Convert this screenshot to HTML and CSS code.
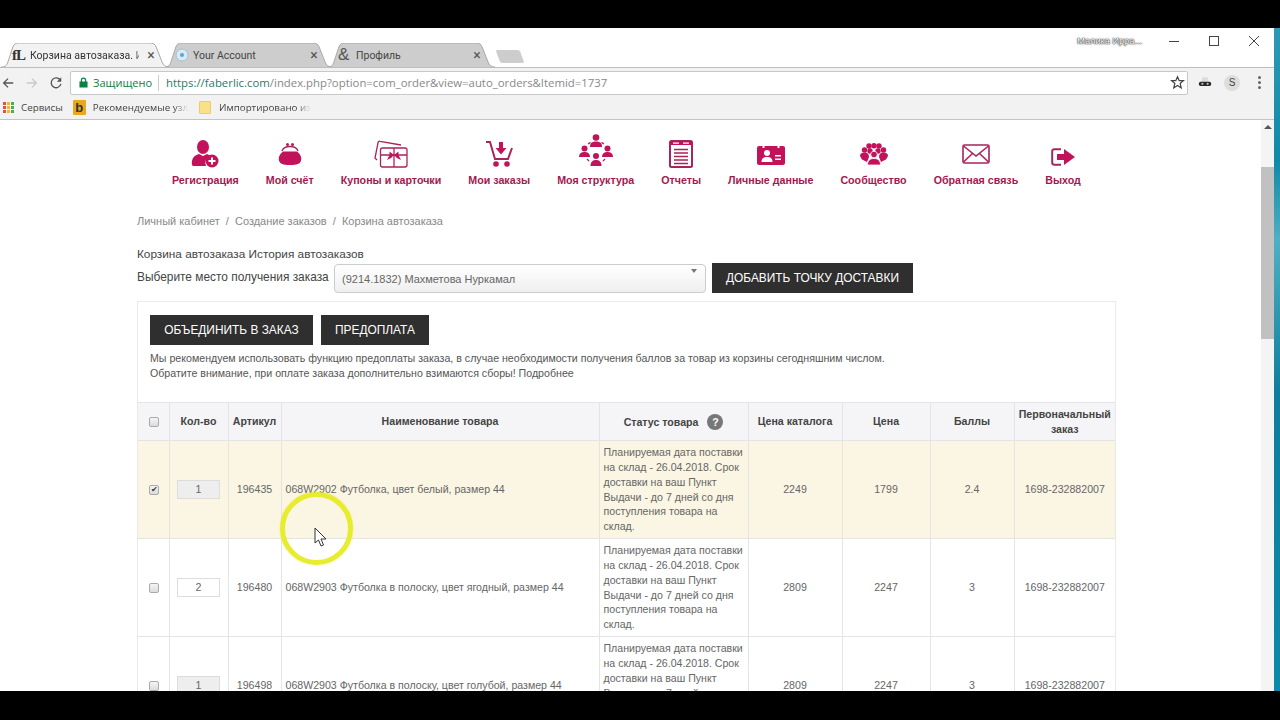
FILE: index.html
```html
<!DOCTYPE html>
<html lang="ru">
  <head>
    <meta charset="UTF-8" />
    <title>Корзина автозаказа</title>
    <link rel="stylesheet" href="styles.css">
  </head>
  <body>
    <div class="letterbox-top"></div>
    <div class="screen">
      <div class="window">
        <div class="tabstrip">
          <div class="tab tab-active">
            <svg class="tab-shape" viewBox="0 0 170 24" preserveAspectRatio="none"><path d="M0 24C5 24 6 22 7 19L12 4C13 1 15 0 18 0H150C154 0 156 1 157 4L163 19C164 22 166 24 170 24"/></svg>
            <span class="fav fav-fl">fL</span>
            <span class="tab-title">Корзина автозаказа. Ис</span>
            <span class="tab-close">×</span>
          </div>
          <div class="tab">
            <svg class="tab-shape" viewBox="0 0 170 24" preserveAspectRatio="none"><path d="M0 24C5 24 6 22 7 19L12 4C13 1 15 0 18 0H150C154 0 156 1 157 4L163 19C164 22 166 24 170 24"/></svg>
            <svg class="fav" viewBox="0 0 14 14"><circle cx="7" cy="7" r="6" fill="#dbe9f3" stroke="#9cc3dc"/><circle cx="7" cy="7" r="2" fill="#5aa4d6"/></svg>
            <span class="tab-title">Your Account</span>
            <span class="tab-close">×</span>
          </div>
          <div class="tab">
            <svg class="tab-shape" viewBox="0 0 170 24" preserveAspectRatio="none"><path d="M0 24C5 24 6 22 7 19L12 4C13 1 15 0 18 0H150C154 0 156 1 157 4L163 19C164 22 166 24 170 24"/></svg>
            <span class="fav fav-amp">&amp;</span>
            <span class="tab-title">Профиль</span>
            <span class="tab-close">×</span>
          </div>
          <div class="tab-new"></div>
          <div class="profile-name">Малика Ирра...</div>
          <div class="win-buttons">
            <svg viewBox="0 0 12 12"><path d="M1 6.5H11"/></svg>
            <svg viewBox="0 0 12 12"><rect x="1.5" y="1.5" width="9" height="9"/></svg>
            <svg viewBox="0 0 12 12"><path d="M1 1L11 11M11 1L1 11"/></svg>
          </div>
        </div>

        <div class="toolbar">
          <svg class="nav-btn" viewBox="0 0 16 16"><path d="M14 8H3M8 3L3 8L8 13"/></svg>
          <svg class="nav-btn nav-btn-off" viewBox="0 0 16 16"><path d="M2 8H13M8 3L13 8L8 13"/></svg>
          <svg class="nav-btn" viewBox="0 0 16 16"><path d="M13 5A5.6 5.6 0 1 0 13.6 9"/><path class="solid" d="M14 1.5V6.500H9Z"/></svg>
          <div class="omnibox">
            <svg class="lock" viewBox="0 0 10 12"><path d="M2 5V3.500A3 3 0 0 1 8 3.500V5H9.500V11.500H.5V5ZM3.300 5H6.700V3.500A1.700 1.700 0 0 0 3.300 3.500Z"/></svg>
            <span class="secure">Защищено</span>
            <span class="url"><b>https://faberlic.com</b>/index.php?option=com_order&amp;view=auto_orders&amp;Itemid=1737</span>
            <svg class="star" viewBox="0 0 16 16"><path d="M8 1.800L9.800 6H14.300L10.800 9L12 13.800L8 11.200L4 13.800L5.200 9L1.700 6H6.200Z"/></svg>
          </div>
          <div class="extensions">
            <svg class="ext-glasses" viewBox="0 0 16 12"><path class="hat" d="M4 5L5 0H11L12 5Z"/><rect x="1" y="5" width="14" height="5" rx="2"/><circle class="eye" cx="5" cy="7.500" r="1.300"/><circle class="eye" cx="11" cy="7.500" r="1.300"/></svg>
            <span class="ext-s">S</span>
            <span class="ext-menu"><i></i><i></i><i></i></span>
          </div>
        </div>

        <div class="bookmarks">
          <span class="bm">
            <span class="apps-grid"><i></i><i></i><i></i><i></i><i></i><i></i><i></i><i></i><i></i></span>
            Сервисы
          </span>
          <span class="bm">
            <span class="bing-icon">b</span>
            <span class="bm-fade">Рекомендуемые узл</span>
          </span>
          <span class="bm">
            <span class="folder-icon"></span>
            <span class="bm-fade">Импортировано из</span>
          </span>
        </div>

        <div class="viewport">
          <div class="page">
            <nav class="topnav">
              <a class="topnav-item">
                <svg viewBox="0 0 28 28" width="28" height="28"><ellipse cx="12" cy="7" rx="6" ry="7"/><path d="M1 25C0 18 4 15 8 14L12 16L16 14C17 14.500 18 15 19 15.500A8 8 0 0 0 15 26H2Z"/><circle cx="21" cy="21" r="6.500"/><path class="cut" d="M20 17.500H22V20H24.500V22H22V24.500H20V22H17.500V20H20Z"/></svg>
                Регистрация
              </a>
              <a class="topnav-item">
                <svg viewBox="0 0 24 24" width="24" height="24"><circle cx="9.500" cy="2.500" r="1.500"/><circle cx="14.500" cy="2.500" r="1.500"/><path class="line" d="M4 9C6 3 18 3 20 9"/><path d="M5 9.500H19C22 12 24 15 23 18.500C22 22 19 23 12 23C5 23 2 22 1 18.500C0 15 2 12 5 9.500Z"/></svg>
                Мой счёт
              </a>
              <a class="topnav-item">
                <svg viewBox="0 0 34 28" width="34" height="28"><path class="line" d="M3 20L1 18L4 3C4 1.500 5 1 6 1.300L27 5"/><rect class="line" x="6.500" y="8" width="26.500" height="19" rx="2"/><path class="line" d="M6.500 15H33M20 8V27"/><path d="M20 15L15.500 11.500L15.500 15L13 20L17 18L20 15L23 18L27 20L24.500 15L24.500 11.500Z"/></svg>
                Купоны и карточки
              </a>
              <a class="topnav-item">
                <svg viewBox="0 0 28 28" width="28" height="28"><path class="line line-thick" d="M1 2H5L10 19H23L27 8"/><circle cx="11" cy="24" r="2.800"/><circle cx="22" cy="24" r="2.800"/><path d="M14 2H18V8H21.500L16 14.500L10.500 8H14Z"/></svg>
                Мои заказы
              </a>
              <a class="topnav-item">
                <svg class="icon-struct" viewBox="0 0 34 32" width="34" height="32"><circle cx="17" cy="3.500" r="3.300"/><path d="M11 13C11 8 14 7.500 17 7.500C20 7.500 23 8 23 13Z"/><circle cx="5.500" cy="14.500" r="3"/><path d="M0 23C0 19 3 18 5.500 18C8 18 11 19 11 23Z"/><circle cx="28.500" cy="14.500" r="3"/><path d="M23 23C23 19 26 18 28.500 18C31 18 34 19 34 23Z"/><circle cx="17" cy="22" r="3"/><path d="M11.500 32C11.500 27 14.500 26 17 26C19.500 26 22.500 27 22.500 32Z"/><path class="line" stroke-dasharray="3 2" d="M9 10L12 8M25 10L22 8M8 25L11 28M26 25L23 28"/></svg>
                Моя структура
              </a>
              <a class="topnav-item">
                <svg viewBox="0 0 24 28" width="24" height="28"><rect class="line line-thick" x="1" y="1" width="22" height="26" rx="1.500"/><path d="M1 1H23V5H1Z"/><path class="cut" d="M4 2.500H10V3.700H4ZM14 2.500H20V3.700H14Z"/><path class="line" d="M5 9.500H19M5 13H19M5 16.500H19M5 20H19M5 23.500H19"/></svg>
                Отчеты
              </a>
              <a class="topnav-item">
                <svg viewBox="0 0 28 22" width="28" height="22"><rect y="3" width="28" height="19" rx="2"/><rect class="cut" x="5.500" y="0" width="2" height="5"/><rect class="cut" x="20.500" y="0" width="2" height="5"/><circle class="cut" cx="10" cy="10" r="3"/><path class="cut" d="M4.500 19C4.500 15 7 14 10 14C13 14 15.500 15 15.500 19Z"/><path class="cut" d="M18 12H24V13.500H18ZM18 15.500H24V17H18Z"/></svg>
                Личные данные
              </a>
              <a class="topnav-item">
                <svg class="icon-crowd" viewBox="0 0 28 22" width="28" height="22"><circle cx="9" cy="3" r="2.700"/><circle cx="14" cy="2.700" r="2.700"/><circle cx="19" cy="3" r="2.700"/><circle cx="4.500" cy="7" r="2.700"/><circle cx="23.500" cy="7" r="2.700"/><circle cx="10" cy="8" r="2.700"/><circle cx="18" cy="8" r="2.700"/><path d="M0 13C0 10 3 9.500 5 9.500C8 9.500 9 12 9 14L7 19L2 16.500Z"/><path d="M28 13C28 10 25 9.500 23 9.500C20 9.500 19 12 19 14L21 19L26 16.500Z"/><circle class="front" cx="14" cy="11.500" r="3.300"/><path class="front" d="M7.500 22C7.500 17 10.500 15.500 14 15.500C17.500 15.500 20.500 17 20.500 22Z"/></svg>
                Сообщество
              </a>
              <a class="topnav-item">
                <svg viewBox="0 0 28 20" width="28" height="20"><rect class="line line-mail" x="1" y="1" width="26" height="18" rx="1.500"/><path class="line line-mail" d="M1.500 2L14 12L26.500 2M1.500 18L10.500 9.500M26.500 18L17.500 9.500"/></svg>
                Обратная связь
              </a>
              <a class="topnav-item">
                <svg class="icon-exit" viewBox="0 0 24 18" width="24" height="18"><path class="line line-thick" d="M10 1.200H3.500C2 1.200 1.200 2 1.200 3.500V14.500C1.200 16 2 16.800 3.500 16.800H10"/><path d="M6 6H13V1L24 9L13 17V12H6Z"/></svg>
                Выход
              </a>
            </nav>

            <div class="content">
              <div class="breadcrumb">Личный кабинет <span>/</span> Создание заказов <span>/</span> Корзина автозаказа</div>
              <div class="cart-links">Корзина автозаказа История автозаказов</div>
              <div class="delivery-row">
                <span class="delivery-label">Выберите место получения заказа</span>
                <div class="select-box">(9214.1832) Махметова Нуркамал</div>
                <button class="btn btn-delivery">ДОБАВИТЬ ТОЧКУ ДОСТАВКИ</button>
              </div>

              <div class="panel">
                <div class="panel-head">
                  <div class="panel-buttons">
                    <button class="btn btn-merge">ОБЪЕДИНИТЬ В ЗАКАЗ</button>
                    <button class="btn btn-prepay">ПРЕДОПЛАТА</button>
                  </div>
                  <p class="notice">Мы рекомендуем использовать функцию предоплаты заказа, в случае необходимости получения баллов за товар из корзины сегодняшним числом.<br />Обратите внимание, при оплате заказа дополнительно взимаются сборы! Подробнее</p>
                </div>

                <table class="orders">
                  <colgroup>
                    <col class="col-check" /><col class="col-qty" /><col class="col-art" /><col class="col-name" /><col class="col-status" /><col class="col-catalog" /><col class="col-price" /><col class="col-points" /><col class="col-first" />
                  </colgroup>
                  <thead>
                    <tr>
                      <th><span class="check"></span></th>
                      <th>Кол-во</th>
                      <th>Артикул</th>
                      <th>Наименование товара</th>
                      <th>Статус товара <span class="help">?</span></th>
                      <th>Цена каталога</th>
                      <th>Цена</th>
                      <th>Баллы</th>
                      <th>Первоначальный заказ</th>
                    </tr>
                  </thead>
                  <tbody>
                    <tr class="row-selected">
                      <td class="c"><span class="check check-on">✔</span></td>
                      <td class="c"><span class="qty qty-off">1</span></td>
                      <td class="c">196435</td>
                      <td>068W2902 Футболка, цвет белый, размер 44</td>
                      <td>Планируемая дата поставки на склад - 26.04.2018. Срок доставки на ваш Пункт Выдачи - до 7 дней со дня поступления товара на склад.</td>
                      <td class="c">2249</td>
                      <td class="c">1799</td>
                      <td class="c">2.4</td>
                      <td class="c">1698-232882007</td>
                    </tr>
                    <tr>
                      <td class="c"><span class="check"></span></td>
                      <td class="c"><span class="qty">2</span></td>
                      <td class="c">196480</td>
                      <td>068W2903 Футболка в полоску, цвет ягодный, размер 44</td>
                      <td>Планируемая дата поставки на склад - 26.04.2018. Срок доставки на ваш Пункт Выдачи - до 7 дней со дня поступления товара на склад.</td>
                      <td class="c">2809</td>
                      <td class="c">2247</td>
                      <td class="c">3</td>
                      <td class="c">1698-232882007</td>
                    </tr>
                    <tr>
                      <td class="c"><span class="check"></span></td>
                      <td class="c"><span class="qty qty-off">1</span></td>
                      <td class="c">196498</td>
                      <td>068W2903 Футболка в полоску, цвет голубой, размер 44</td>
                      <td>Планируемая дата поставки на склад - 26.04.2018. Срок доставки на ваш Пункт Выдачи - до 7 дней со дня поступления товара на склад.</td>
                      <td class="c">2809</td>
                      <td class="c">2247</td>
                      <td class="c">3</td>
                      <td class="c">1698-232882007</td>
                    </tr>
                  </tbody>
                </table>
              </div>
            </div>

            <div class="click-ring"></div>
            <svg class="cursor" viewBox="0 0 14 20" width="14" height="20"><path d="M1 1V16L4.500 13L7 19L9.500 18L7 12H12Z"/></svg>
          </div>

          <div class="scrollbar">
            <span class="scroll-up"></span>
            <div class="scroll-thumb"></div>
          </div>
        </div>
      </div>
      <div class="wallpaper"></div>
    </div>
    <div class="letterbox-bottom"></div>
  </body>
</html>
```

FILE: styles.css
```css
* {
  box-sizing: border-box;
}
html,
body {
  margin: 0;
  height: 720px;
  overflow: hidden;
  background: #000;
  font-family: "Liberation Sans", Arial, sans-serif;
}
.letterbox-top {
  height: 28px;
  background: #000;
}
.letterbox-bottom {
  height: 29px;
  background: #000;
}
.screen {
  display: flex;
  height: 663px;
}
.window {
  flex: 1;
  display: flex;
  flex-direction: column;
  min-width: 0;
  background: #fff;
}
.wallpaper {
  width: 6px;
  background: linear-gradient(180deg, #2a9bb4 0%, #0f8aa6 20%, #4fb0c2 32%, #0c7f9c 55%, #0a8aa8 100%);
}

/* browser chrome */
.tabstrip {
  display: flex;
  align-items: flex-end;
  height: 39px;
  padding-left: 1px;
  position: relative;
  background: #fff;
}
.tab {
  position: relative;
  display: flex;
  align-items: center;
  width: 168px;
  height: 24px;
  margin-right: -5px;
  padding: 0 12px 0 11px;
  font-family: Roboto, sans-serif;
  font-size: 10.500px;
  color: #444;
}
.tab-shape {
  position: absolute;
  left: 0;
  top: 0;
  width: 100%;
  height: 100%;
}
.tab-shape path {
  fill: #cdcdcd;
  stroke: #a9a9a9;
  stroke-width: 1;
  vector-effect: non-scaling-stroke;
}
.tab-active {
  z-index: 2;
  color: #333;
}
.tab-active .tab-shape path {
  fill: #f2f2f2;
}
.fav {
  position: relative;
  flex: none;
  width: 14px;
  height: 14px;
  margin-right: 4px;
}
.fav-fl {
  font-family: "Liberation Serif", serif;
  font-weight: bold;
  font-size: 15px;
  line-height: 14px;
  letter-spacing: -1px;
  color: #333;
}
.fav-amp {
  font-family: "Liberation Sans", sans-serif;
  font-size: 17px;
  line-height: 14px;
  color: #555;
}
.tab-title {
  position: relative;
  flex: 1;
  min-width: 0;
  white-space: nowrap;
}
.tab-active .tab-title {
  -webkit-mask-image: linear-gradient(90deg, #000 93%, transparent 110%);
  mask-image: linear-gradient(90deg, #000 93%, transparent 110%);
}
.tab-close {
  position: relative;
  flex: none;
  width: 12px;
  margin-left: 6px;
  font-size: 14px;
  line-height: 14px;
  text-align: center;
  color: #555;
}
.tab-new {
  width: 24px;
  height: 13px;
  margin: 0 0 4px 3px;
  background: #cdcdcd;
  border-radius: 2px;
  transform: skewX(20deg);
  position: relative;
  left: 5px;
}
.profile-name {
  margin-left: auto;
  align-self: flex-start;
  margin-top: 8px;
  font-size: 9.200px;
  line-height: 11px;
  color: #fff;
  text-shadow: 0 0 1px #333, 0 0 1px #333, 0 0 2px #555;
}
.win-buttons {
  display: flex;
  align-self: flex-start;
  gap: 28px;
  margin: 7px 14px 0 26px;
}
.win-buttons svg {
  width: 12px;
  height: 12px;
  fill: none;
  stroke: #444;
  stroke-width: 1;
}
.toolbar {
  display: flex;
  align-items: center;
  height: 30px;
  padding: 0 0 0 1px;
  background: #f2f2f2;
  border-top: 1px solid #bdbdbd;
}
.nav-btn {
  width: 14px;
  height: 14px;
  margin-right: 10px;
  fill: none;
  stroke: #555;
  stroke-width: 1.500;
}
.nav-btn .solid {
  fill: #555;
  stroke: none;
}
.nav-btn-off {
  stroke: #c8c8c8;
}
.omnibox {
  flex: 1;
  display: flex;
  align-items: center;
  height: 24px;
  margin-left: -3px;
  padding: 0 2px 0 8px;
  background: #fff;
  border: 1px solid #c8c8c8;
  border-radius: 2px;
  font-family: "Open Sans", sans-serif;
  font-size: 11.370px;
  white-space: nowrap;
  min-width: 0;
}
.lock {
  width: 9px;
  height: 11px;
  margin-right: 5px;
  fill: #0b8043;
}
.secure {
  font-size: 11px;
  color: #0b8043;
  padding-right: 6px;
  margin-right: 7px;
  border-right: 1px solid #ccc;
  line-height: 16px;
}
.url {
  color: #888;
  flex: 1;
}
.url b {
  font-weight: normal;
  color: #2c7a6b;
}
.star {
  width: 15px;
  height: 15px;
  fill: none;
  stroke: #444;
  stroke-width: 1.300;
}
.extensions {
  display: flex;
  align-items: center;
  width: 86px;
  padding-left: 10px;
}
.ext-glasses {
  width: 14px;
  height: 11px;
  fill: #2b2526;
}
.ext-glasses .hat {
  fill: #ddd;
}
.ext-glasses .eye {
  fill: #bbb;
}
.ext-s {
  width: 16px;
  height: 16px;
  margin-left: 12px;
  border-radius: 50%;
  background: #ddd;
  font-size: 10px;
  line-height: 16px;
  text-align: center;
  color: #444;
}
.ext-menu {
  display: flex;
  flex-direction: column;
  gap: 2px;
  margin-left: 18px;
}
.ext-menu i {
  width: 3px;
  height: 3px;
  border-radius: 50%;
  background: #666;
}
.bookmarks {
  display: flex;
  align-items: center;
  height: 23px;
  padding: 0 0 2px 3px;
  background: #f2f2f2;
  border-bottom: 1px solid #c4c4c4;
  font-family: "Open Sans", sans-serif;
  font-size: 9.800px;
  color: #444;
}
.bm {
  display: flex;
  align-items: center;
  white-space: nowrap;
}
.apps-grid {
  display: grid;
  grid-template-columns: repeat(3, 3px);
  gap: 1px;
  margin-right: 7px;
}
.apps-grid i {
  width: 3px;
  height: 3px;
  background: #d9534f;
}
.apps-grid i:nth-child(3n+2) {
  background: #e8b93c;
}
.apps-grid i:nth-child(3n) {
  background: #57a55a;
}
.bing-icon {
  width: 13px;
  height: 15px;
  margin: 0 7px 0 10px;
  background: #e8a91f;
  border-radius: 1px;
  font-family: "Liberation Sans", sans-serif;
  font-weight: bold;
  font-size: 13px;
  line-height: 15px;
  text-align: center;
  color: #333;
}
.folder-icon {
  width: 12px;
  height: 13px;
  margin: 0 8px 0 11px;
  background: #fbe08a;
  border: 1px solid #eccb6d;
  border-radius: 1px;
}
.bm-fade {
  -webkit-mask-image: linear-gradient(90deg, #000 85%, transparent 100%);
  mask-image: linear-gradient(90deg, #000 85%, transparent 100%);
}

/* page */
.viewport {
  flex: 1;
  display: flex;
  min-height: 0;
}
.page {
  position: relative;
  flex: 1;
  min-width: 0;
  overflow: hidden;
  background: #fff;
}
.scrollbar {
  position: relative;
  width: 13px;
  background: #f4f4f4;
}
.scroll-up {
  display: block;
  width: 0;
  margin: 5px auto 0;
  border: 4px solid transparent;
  border-top: 0;
  border-bottom: 4px solid #555;
}
.scroll-thumb {
  height: 172px;
  margin-top: 38px;
  background: #c1c1c1;
}
.topnav {
  display: flex;
  gap: 27px;
  height: 72px;
  padding: 13px 0 0 172px;
}
.topnav-item {
  display: flex;
  flex-direction: column;
  align-items: center;
  height: 54px;
  font-size: 10.680px;
  font-weight: bold;
  line-height: 13px;
  white-space: nowrap;
  color: #a5174f;
}
.topnav-item svg {
  margin: auto 0;
  fill: #c2125a;
}
.topnav-item .icon-struct {
  margin-bottom: 8px;
}
.topnav-item .icon-exit {
  margin-top: auto;
  margin-bottom: 8px;
}
.topnav-item .line {
  fill: none;
  stroke: #a8255c;
  stroke-width: 1.300;
}
.topnav-item .line-thick {
  stroke-width: 2;
}
.topnav-item .line-mail {
  stroke-width: 1.600;
}
.topnav-item .cut {
  fill: #fff;
}
.icon-crowd .front {
  stroke: #fff;
  stroke-width: .8;
}
.content {
  width: 979px;
  margin-left: 137px;
}
.breadcrumb {
  font-size: 11px;
  line-height: 14px;
  padding-top: 22px;
  height: 36px;
  color: #888;
}
.breadcrumb span {
  margin: 0 3px;
}
.cart-links {
  margin-top: 18px;
  font-size: 11.800px;
  line-height: 16px;
  color: #444;
}
.delivery-row {
  display: flex;
  align-items: flex-start;
  margin-top: 1px;
}
.delivery-label {
  width: 197px;
  font-size: 11.900px;
  line-height: 16px;
  padding-top: 6px;
  color: #444;
}
.select-box {
  position: relative;
  width: 372px;
  height: 29px;
  margin-top: 1px;
  padding: 0 7px;
  border: 1px solid #ccc;
  border-radius: 4px;
  background: linear-gradient(180deg, #fff, #efefef);
  font-size: 11px;
  line-height: 29px;
  color: #666;
}
.select-box::after {
  content: "";
  position: absolute;
  right: 8px;
  top: 4px;
  border: 3.500px solid transparent;
  border-top: 4px solid #777;
  border-bottom: 0;
}
.btn {
  height: 30px;
  padding: 0;
  border: 0;
  background: #2f2f2f;
  font-family: "Liberation Sans", sans-serif;
  font-size: 11.900px;
  color: #fff;
}
.btn-delivery {
  width: 201px;
  margin-left: 6px;
}
.btn-merge {
  width: 163px;
}
.btn-prepay {
  width: 108px;
}
.panel {
  margin-top: 8px;
  border: 1px solid #e9e9e9;
  border-bottom: 0;
}
.panel-head {
  height: 100px;
  padding: 13px 12px 0;
}
.panel-buttons {
  display: flex;
  gap: 8px;
}
.notice {
  margin: 6px 0 0;
  font-size: 10.630px;
  line-height: 15px;
  color: #555;
}
.orders {
  width: 100%;
  table-layout: fixed;
  border-collapse: collapse;
  font-size: 10.600px;
  color: #666;
}
.col-check { width: 31px; }
.col-qty { width: 59px; }
.col-art { width: 53px; }
.col-name { width: 318px; }
.col-status { width: 149px; }
.col-catalog { width: 94px; }
.col-price { width: 88px; }
.col-points { width: 84px; }
.col-first { width: 101px; }
.orders th,
.orders td {
  border: 1px solid #e4e4e4;
  padding: 0 4px;
}
.orders tr > :first-child {
  border-left: 0;
  padding-left: 6px;
}
.orders tr > :last-child {
  border-right: 0;
}
.orders th {
  height: 38px;
  background: #f5f5f7;
  font-weight: bold;
  line-height: 15px;
  text-align: center;
  color: #444;
}
.orders td {
  height: 98px;
  line-height: 14.800px;
}
.orders td.c {
  text-align: center;
}
.row-selected td {
  background: #faf6e3;
}
.check {
  display: inline-block;
  width: 10px;
  height: 10px;
  border: 1px solid #aaa;
  border-radius: 2px;
  background: linear-gradient(180deg, #f4f4f4, #dcdcdc);
  font-size: 8px;
  line-height: 8px;
  text-align: center;
  color: #333;
  vertical-align: middle;
}
.qty {
  display: block;
  width: 43px;
  height: 19px;
  margin: 0 auto;
  border: 1px solid #ddd;
  background: #fff;
  line-height: 17px;
  text-align: center;
}
.qty-off {
  background: #eee;
}
.help {
  display: inline-block;
  width: 16px;
  height: 16px;
  margin-left: 6px;
  border-radius: 50%;
  background: #777;
  line-height: 16px;
  color: #fff;
}
.click-ring {
  position: absolute;
  left: 280px;
  top: 372px;
  width: 73px;
  height: 73px;
  border: 5px solid #e8ec2e;
  border-radius: 50%;
  box-shadow: 0 0 2px rgba(232, 236, 46, .7);
}
.cursor {
  position: absolute;
  left: 314px;
  top: 407px;
  fill: #fff;
  stroke: #333;
  stroke-width: 1;
}
```
